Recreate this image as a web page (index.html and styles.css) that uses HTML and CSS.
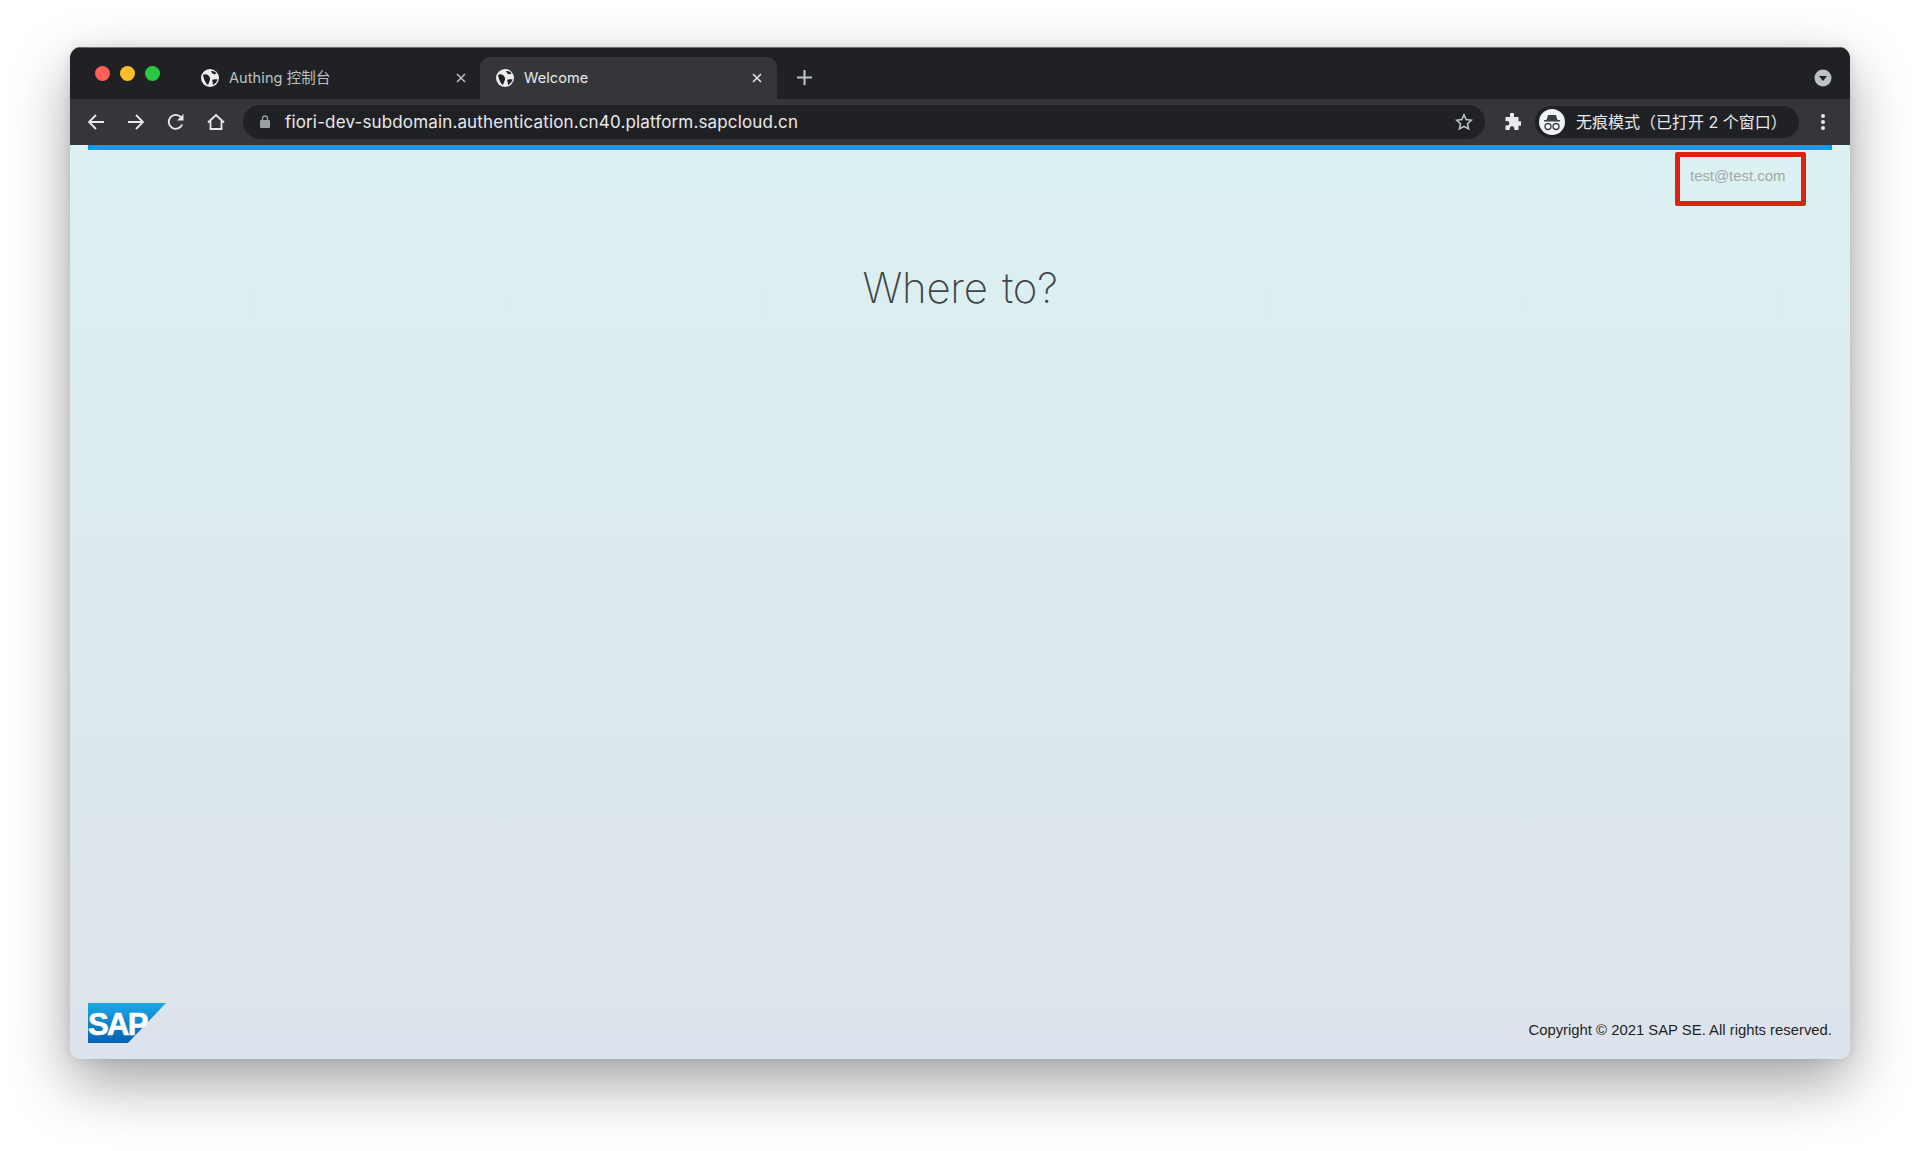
FILE: index.html
```html
<!DOCTYPE html>
<html lang="en">
<head>
    <meta charset="UTF-8">
    <title>Welcome</title>
    <link rel="stylesheet" href="styles.css">
</head>
<body>
    <svg class="defs" width="0" height="0">
        <symbol id="globe" viewBox="0 0 18 18">
            <circle cx="9" cy="9" r="9" fill="#eceded"/>
            <path d="M2 6C5 4 8 6 9 9c.5 2-1 4-2 7-2-1-3-4-4-6zM10 2c2-.5 5 1 5.500 2.500C13 6 11 5 10 2zM11 11c2-1 4-1 5.500-.5C16 13 14 15 12 16c-.5-2 0-3-1-5z" fill="#202124"/>
        </symbol>
    </svg>

    <div class="window">
        <div class="tabstrip">
            <div class="lights">
                <span class="light red"></span>
                <span class="light yellow"></span>
                <span class="light green"></span>
            </div>
            <div class="tab">
                <svg class="favicon"><use href="#globe"/></svg>
                <span class="tab-title">Authing 控制台</span>
                <svg class="tab-close" viewBox="0 0 10 10"><path d="M1 1l8 8M9 1l-8 8"/></svg>
            </div>
            <div class="tab active">
                <svg class="favicon"><use href="#globe"/></svg>
                <span class="tab-title">Welcome</span>
                <svg class="tab-close" viewBox="0 0 10 10"><path d="M1 1l8 8M9 1l-8 8"/></svg>
            </div>
            <svg class="new-tab" viewBox="0 0 14 14"><path d="M7 0v14M0 7h14"/></svg>
            <div class="tab-search">
                <svg viewBox="0 0 18 18"><circle cx="9" cy="9" r="8.500" fill="#bdc1c6"/><path d="M5 7h8l-4 5z" fill="#202124"/></svg>
            </div>
        </div>

        <div class="toolbar">
            <svg class="nav-icon" viewBox="0 0 18 18"><path d="M17 9H2M9 2L2 9l7 7"/></svg>
            <svg class="nav-icon" viewBox="0 0 18 18"><path d="M1 9h15M9 2l7 7-7 7"/></svg>
            <svg class="nav-icon" viewBox="0 0 18 18"><path d="M15.200 11.500A7 7 0 1 1 14 4.200"/><path class="fill" d="M16.500 1v6.500H10z"/></svg>
            <svg class="nav-icon" viewBox="0 0 18 18"><path d="M1 9.500L9 2l8 7.500M3.500 8v8h11V8"/></svg>
            <div class="omnibox">
                <svg class="lock" viewBox="0 0 10 13"><path d="M2.500 5V3.500a2.500 2.500 0 0 1 5 0V5" fill="none" stroke="#9aa0a6" stroke-width="1.300"/><rect y="5" width="10" height="8" rx="1" fill="#9aa0a6"/></svg>
                <span class="url">fiori-dev-subdomain.authentication.cn40.platform.sapcloud.cn</span>
                <svg class="star" viewBox="0 0 18 18"><path d="M9 1.800l2.200 4.800 5.200.6-3.900 3.500 1.100 5.200L9 13.300l-4.600 2.600 1.100-5.200L1.600 7.200l5.200-.6z"/></svg>
            </div>
            <svg class="puzzle" viewBox="0 0 18 18"><path d="M7 1.500a2 2 0 0 1 4 0V4h4.500v4.200H17a2.300 2.300 0 0 1 0 4.600h-1.500V17h-4.200v-1.500a2.300 2.300 0 0 0-4.600 0V17H2.500v-4.500H4a2.300 2.300 0 0 0 0-4.600H2.500V4H7z"/></svg>
            <div class="profile">
                <div class="avatar">
                    <svg viewBox="0 0 26 26"><path d="M9 6h8l1.500 5h-11zM5 11h16v1.500H5z" fill="#3c4043"/><circle cx="9" cy="17.500" r="3" fill="none" stroke="#3c4043" stroke-width="1.300"/><circle cx="17" cy="17.500" r="3" fill="none" stroke="#3c4043" stroke-width="1.300"/></svg>
                </div>
                <span class="profile-name">无痕模式（已打开 2 个窗口）</span>
            </div>
            <div class="menu-dots"><i></i><i></i><i></i></div>
        </div>

        <div class="page">
            <div class="top-bar"></div>
            <div class="user-row">
                <div class="user-mark">test@test.com</div>
            </div>
            <h1>Where to?</h1>
            <div class="footer">
                <svg class="sap-logo" viewBox="0 0 78 40">
                    <defs>
                        <linearGradient id="sapblue" x1="0" y1="0" x2="0" y2="1">
                            <stop offset="0" stop-color="#1aa8e8"/>
                            <stop offset="1" stop-color="#0661b2"/>
                        </linearGradient>
                    </defs>
                    <path d="M0 0h78L40 40H0z" fill="url(#sapblue)"/>
                    <text x="0" y="32" class="sap-text">SAP</text>
                </svg>
                <span class="copyright">Copyright © 2021 SAP SE. All rights reserved.</span>
            </div>
        </div>
    </div>
</body>
</html>
```

FILE: styles.css
```css
html, body {
    height: 100%;
}
body {
    margin: 0;
    padding: 47px 70px 92px 70px;
    box-sizing: border-box;
    background-color: #ffffff;
    font-family: 'Inter', 'Noto Sans CJK SC', sans-serif;
    display: flex;
}
.defs {
    position: absolute;
}
.window {
    flex: 1;
    display: flex;
    flex-direction: column;
    border-radius: 11px;
    overflow: hidden;
    box-shadow: 0 24px 60px rgba(0, 0, 0, 0.36), 0 0 12px rgba(0, 0, 0, 0.1);
}

/* tab strip */
.tabstrip {
    height: 52px;
    flex: none;
    background-color: #202124;
    border-top: 1px solid #6e6f72;
    box-sizing: border-box;
    display: flex;
    align-items: flex-end;
}
.lights {
    display: flex;
    gap: 10px;
    width: 126px;
    padding: 18px 0 0 25px;
    box-sizing: border-box;
    align-self: flex-start;
    flex: none;
}
.light {
    width: 15px;
    height: 15px;
    border-radius: 50%;
}
.red { background-color: #ff5f57; }
.yellow { background-color: #febc2e; }
.green { background-color: #28c840; }
.tab {
    width: 284px;
    height: 42px;
    padding: 0 14px 1px 5px;
    box-sizing: border-box;
    display: flex;
    align-items: center;
    flex: none;
    color: #bdc1c6;
    font-size: 14.500px;
}
.tab.active {
    width: 297px;
    padding: 0 15px 1px 16px;
    background-color: #35363a;
    border-radius: 10px 10px 0 0;
    color: #e8eaed;
}
.favicon {
    width: 18px;
    height: 18px;
    flex: none;
}
.tab-title {
    margin-left: 10px;
    flex: 1;
    line-height: 18px;
    letter-spacing: 0.1px;
}
.tab-close {
    width: 10px;
    height: 10px;
    fill: none;
    stroke: currentColor;
    stroke-width: 1.500;
}
.new-tab {
    width: 15px;
    height: 15px;
    margin: 0 0 14px 20px;
    fill: none;
    stroke: #bdc1c6;
    stroke-width: 2;
}
.tab-search {
    margin-left: auto;
    align-self: center;
    margin-right: 18px;
    margin-top: 9px;
    display: flex;
}
.tab-search svg {
    width: 18px;
    height: 18px;
}

/* toolbar */
.toolbar {
    height: 46px;
    flex: none;
    background-color: #35363a;
    display: flex;
    align-items: center;
    padding: 0 0 1px 17px;
    box-sizing: border-box;
}
.nav-icon {
    width: 18px;
    height: 18px;
    margin-right: 22px;
    flex: none;
    fill: none;
    stroke: #e8eaed;
    stroke-width: 1.800;
}
.nav-icon .fill {
    fill: #e8eaed;
    stroke: none;
}
.nav-icon:nth-child(4) {
    margin-right: 18px;
}
.omnibox {
    width: 1242px;
    height: 34px;
    flex: none;
    background-color: #202124;
    border-radius: 17px;
    display: flex;
    align-items: center;
    padding: 0 12px 0 17px;
    box-sizing: border-box;
}
.lock {
    width: 10px;
    height: 13px;
    flex: none;
}
.url {
    margin-left: 15px;
    flex: 1;
    color: #e8eaed;
    font-size: 17px;
    letter-spacing: 0.15px;
}
.star {
    width: 18px;
    height: 18px;
    fill: none;
    stroke: #c4c7c9;
    stroke-width: 1.500;
}
.puzzle {
    width: 18px;
    height: 18px;
    margin-left: 18px;
    flex: none;
    fill: #e8eaed;
}
.profile {
    width: 264px;
    height: 32px;
    margin-left: 14px;
    flex: none;
    background-color: #202124;
    border-radius: 16px;
    display: flex;
    align-items: center;
    padding-left: 4px;
    box-sizing: border-box;
}
.avatar {
    width: 26px;
    height: 26px;
    border-radius: 50%;
    background-color: #f1f3f4;
    flex: none;
    display: flex;
}
.avatar svg {
    width: 26px;
    height: 26px;
}
.profile-name {
    margin-left: 11px;
    color: #e8eaed;
    font-size: 16px;
    line-height: 20px;
    white-space: nowrap;
}
.menu-dots {
    margin-left: 22px;
    display: flex;
    flex-direction: column;
    gap: 2px;
}
.menu-dots i {
    width: 4px;
    height: 4px;
    border-radius: 50%;
    background-color: #e8eaed;
}

/* page */
.page {
    flex: 1;
    display: flex;
    flex-direction: column;
    padding: 0 18px 16px;
    background: linear-gradient(#dcf1f1, #dde3ec);
}
.top-bar {
    height: 5px;
    background-color: #0a9ee2;
    flex: none;
}
.user-row {
    display: flex;
    justify-content: flex-end;
    padding: 2px 26px 0 0;
}
.user-mark {
    width: 131px;
    height: 54px;
    box-sizing: border-box;
    border: 5px solid #e0210f;
    border-radius: 2px;
    padding: 11px 0 0 10px;
    font-family: 'Liberation Sans', sans-serif;
    font-size: 14.900px;
    color: #a0a8a9;
}
h1 {
    margin: 56px 0 0;
    text-align: center;
    font-size: 42px;
    font-weight: 200;
    line-height: 52px;
    letter-spacing: -0.3px;
    word-spacing: 3px;
    color: #3f4447;
}
.footer {
    margin-top: auto;
    display: flex;
    justify-content: space-between;
    align-items: flex-end;
}
.sap-logo {
    width: 78px;
    height: 40px;
}
.sap-text {
    font-family: 'Liberation Sans', sans-serif;
    font-weight: 700;
    font-size: 31px;
    letter-spacing: -1.600px;
    fill: #ffffff;
    stroke: #ffffff;
    stroke-width: 0.6px;
}
.copyright {
    font-family: 'Liberation Sans', sans-serif;
    font-size: 14.850px;
    color: #1d1f20;
    padding-bottom: 5px;
}
```
